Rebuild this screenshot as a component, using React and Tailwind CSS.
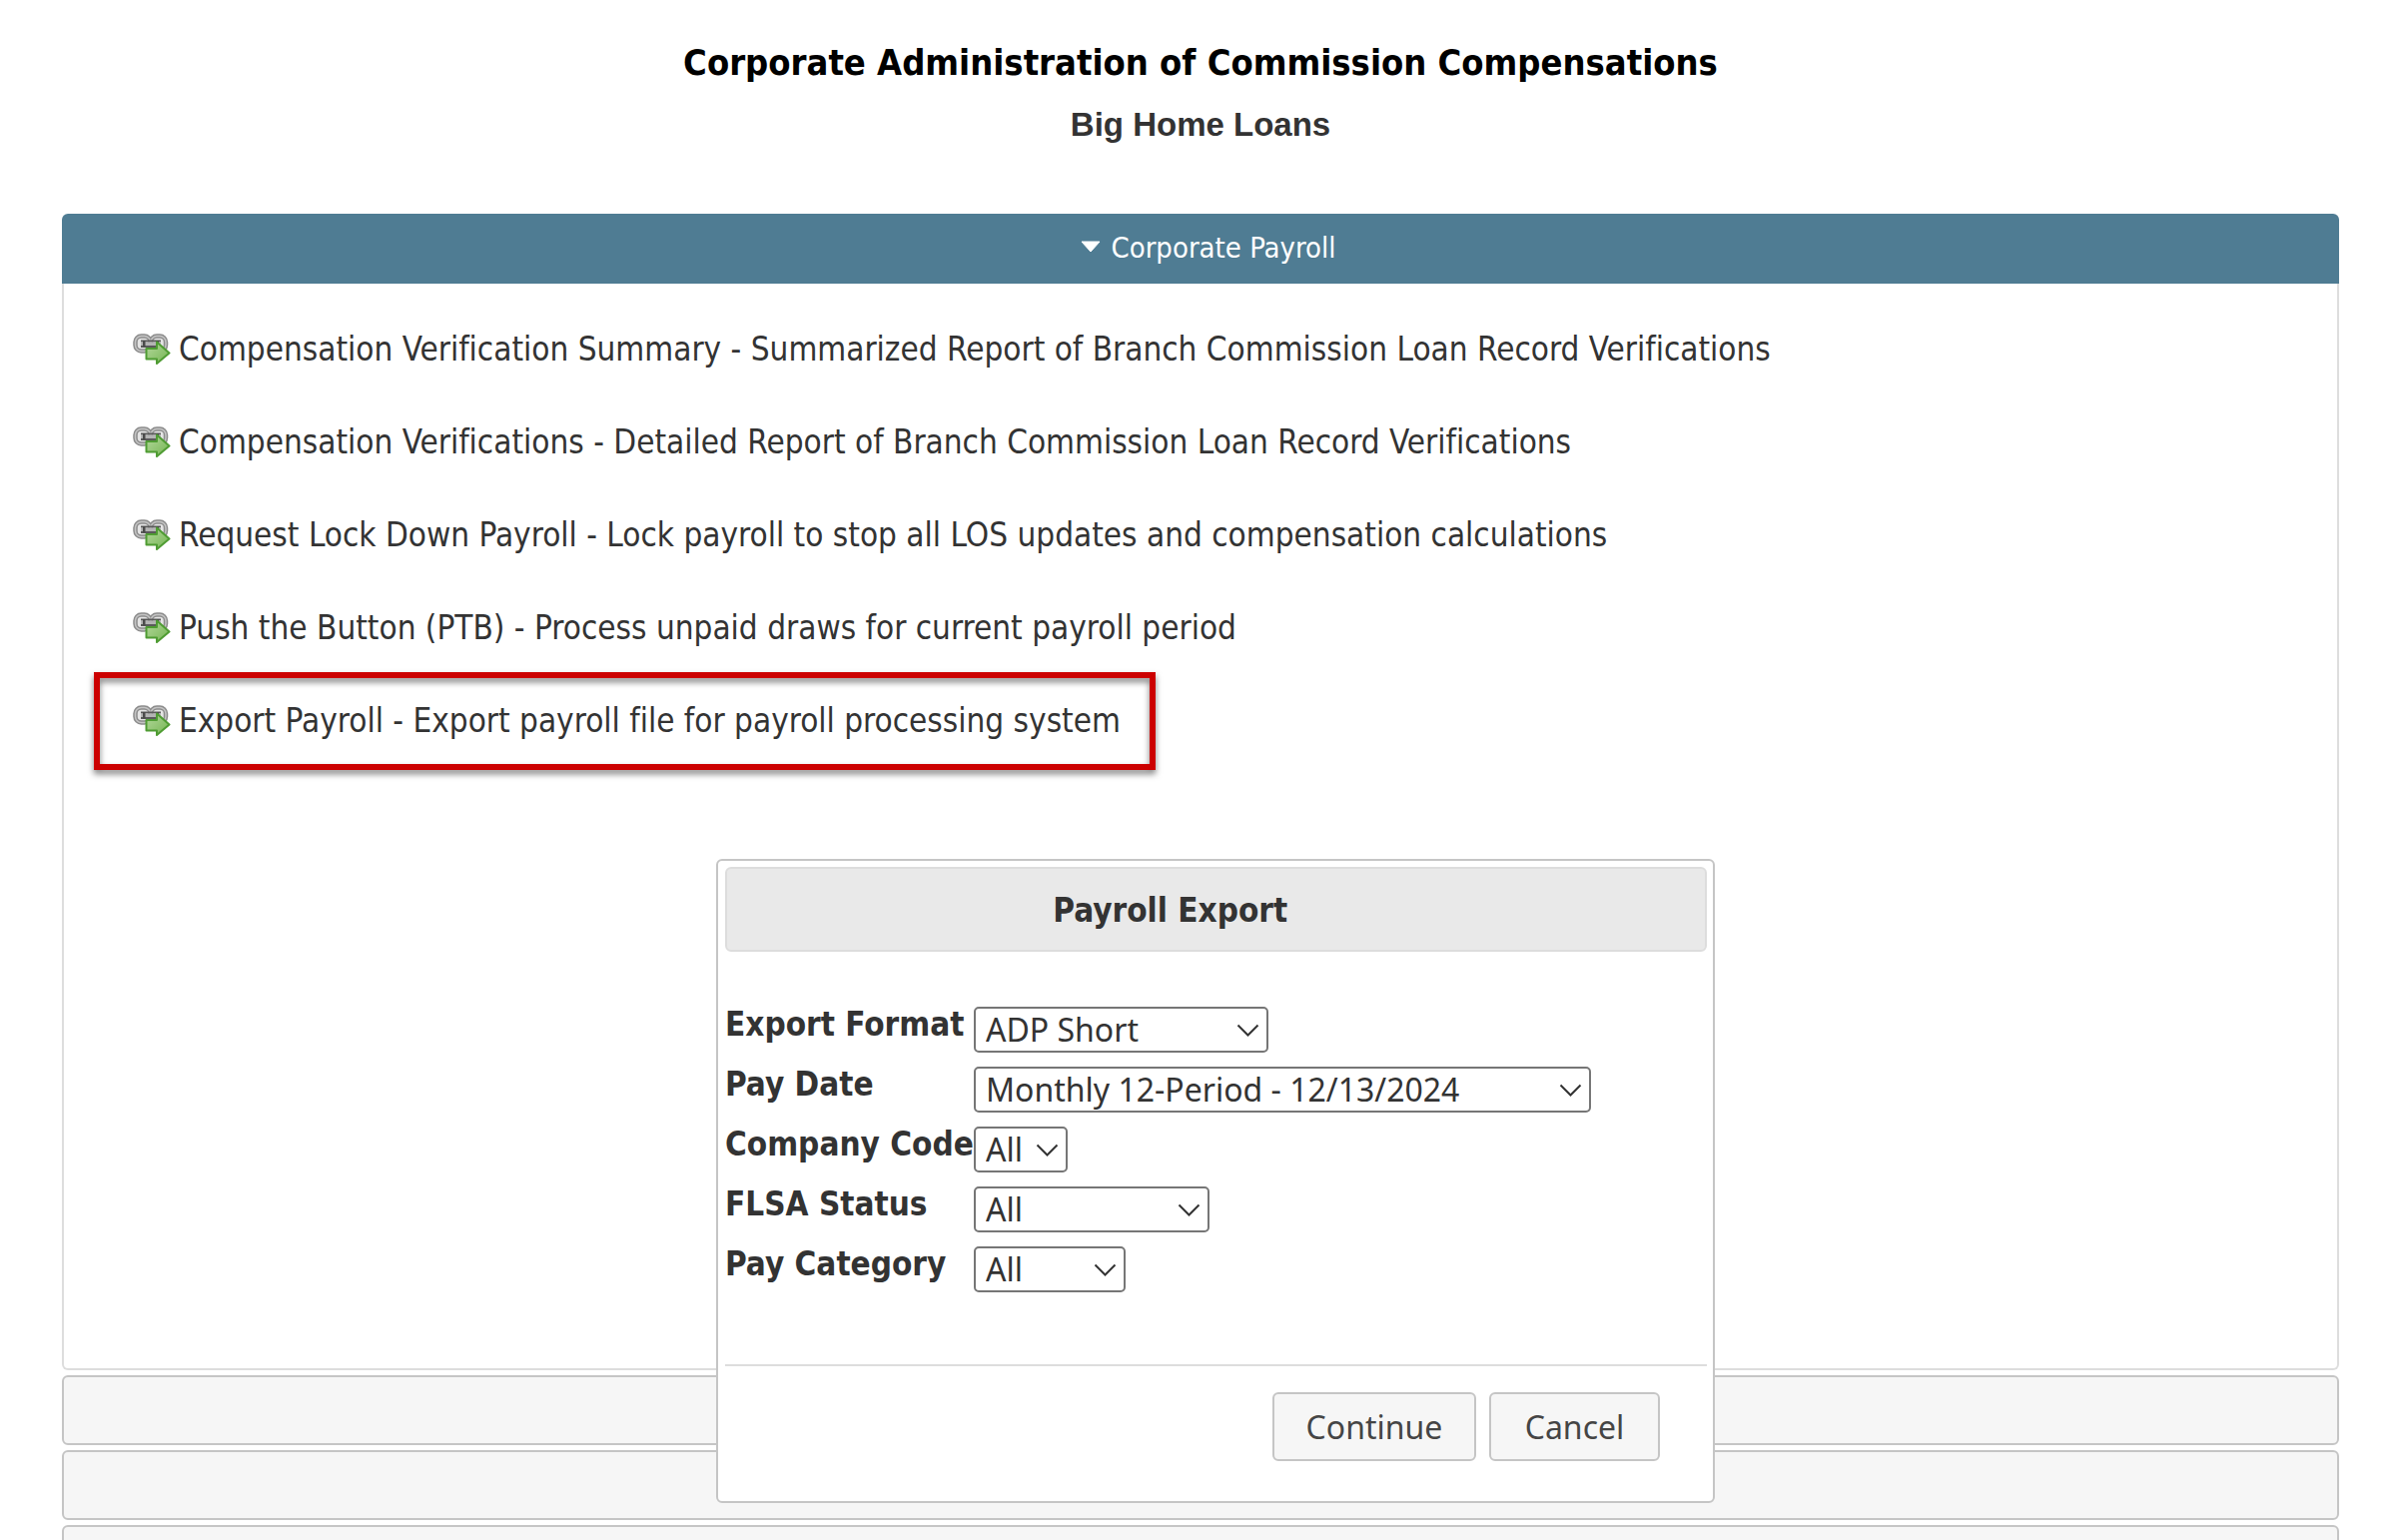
import { useState } from "react";

const links = [
  "Compensation Verification Summary - Summarized Report of Branch Commission Loan Record Verifications",
  "Compensation Verifications - Detailed Report of Branch Commission Loan Record Verifications",
  "Request Lock Down Payroll - Lock payroll to stop all LOS updates and compensation calculations",
  "Push the Button (PTB) - Process unpaid draws for current payroll period",
  "Export Payroll - Export payroll file for payroll processing system",
];

const fields = [
  { id: "format", label: "Export Format", width: "w-[295px]", options: ["ADP Short"] },
  { id: "payDate", label: "Pay Date", width: "w-[618px]", options: ["Monthly 12-Period - 12/13/2024"] },
  { id: "company", label: "Company Code", width: "w-[94px]", options: ["All"] },
  { id: "flsa", label: "FLSA Status", width: "w-[236px]", options: ["All"] },
  { id: "category", label: "Pay Category", width: "w-[152px]", options: ["All"] },
];

function LinkGoIcon() {
  return (
    <svg className="w-[38px] h-[31px] shrink-0" viewBox="0 0 38 31" fill="none">
      <defs>
        <linearGradient id="arrow" x1="0" y1="0" x2="1" y2="1">
          <stop offset="0" stopColor="#b4d89c" />
          <stop offset="1" stopColor="#74b552" />
        </linearGradient>
      </defs>
      {/* Chain */}
      <rect x="2.5" y="2.5" width="15" height="15" rx="6" fill="#e4e4e4" stroke="#8c8c8c" strokeWidth="4.5" />
      <rect x="18" y="2.5" width="15" height="15" rx="6" fill="#e4e4e4" stroke="#8c8c8c" strokeWidth="4.5" />
      <rect x="2.5" y="2.5" width="15" height="15" rx="6" stroke="#c4c4c4" strokeWidth="1.5" />
      <rect x="18" y="2.5" width="15" height="15" rx="6" stroke="#c4c4c4" strokeWidth="1.5" />
      <path d="M8 6.5h20v2H8zM8 12h20v2H8z" fill="#5a5a5a" />
      <path d="M8 8.5h20v3.5H8z" fill="#b4b4b4" />
      <path d="M10 7h2.5v6.5H10zM23.5 7H26v6.5h-2.5z" fill="#4a4a4a" />
      {/* Arrow */}
      <path
        d="M13.5 15H24V8.5L36.5 19.5L24 30V25.5H13.5Z"
        fill="url(#arrow)"
        stroke="#4f9c33"
        strokeWidth="2"
        strokeLinejoin="round"
      />
    </svg>
  );
}

function SelectField({ field }) {
  return (
    <div className="flex items-start">
      <label htmlFor={field.id} className="w-[249px] shrink-0 whitespace-nowrap text-[33px] leading-9 font-bold">
        {field.label}
      </label>
      <div className={`relative ${field.width}`}>
        <select
          id={field.id}
          className="block w-full h-[46px] pl-[10px] appearance-none bg-white border-2 border-[#767676] rounded-[5px] font-['Noto_Sans',sans-serif] text-[32px] leading-[42px]"
        >
          {field.options.map((option) => (
            <option key={option}>{option}</option>
          ))}
        </select>
        <svg
          className="absolute right-[9px] top-[17px] w-[23px] h-[14px] pointer-events-none"
          viewBox="0 0 23 14"
          fill="none"
          stroke="#333"
          strokeWidth="2"
        >
          <path d="M1.5 1.5l10 10l10-10" />
        </svg>
      </div>
    </div>
  );
}

function PayrollExportDialog({ onClose }) {
  const buttonStyle =
    "h-[69px] border-2 border-[#c5c5c5] rounded-md bg-[#f6f6f6] text-[#454545] font-['Noto_Sans',sans-serif] text-[32px]";

  return (
    <div className="absolute inset-x-0 top-[860px] flex justify-center pl-[23px]">
      <div
        role="dialog"
        aria-labelledby="dialog-title"
        className="w-[1000px] pl-[7px] pr-[6px] pt-[6px] pb-10 bg-white border-2 border-[#c5c5c5] rounded-md"
      >
        <div className="h-[85px] px-8 pt-0.5 flex items-center bg-[#e9e9e9] border-2 border-[#ddd] rounded-md">
          <h3 id="dialog-title" className="w-[90%] text-center text-[33px] font-bold">
            Payroll Export
          </h3>
        </div>

        <form onSubmit={(e) => e.preventDefault()}>
          <div className="pt-[55px] pb-[72px] space-y-[14px]">
            {fields.map((field) => (
              <SelectField key={field.id} field={field} />
            ))}
          </div>

          <div className="flex justify-end gap-[13px] pt-[26px] pr-[47px] border-t-2 border-[#ddd]">
            <button type="submit" className={`w-[204px] ${buttonStyle}`}>
              Continue
            </button>
            <button type="button" onClick={onClose} className={`w-[171px] ${buttonStyle}`}>
              Cancel
            </button>
          </div>
        </form>
      </div>
    </div>
  );
}

export default function App() {
  const [dialogOpen, setDialogOpen] = useState(true);

  return (
    <div className="relative h-screen overflow-hidden bg-white pt-8 pl-[62px] pr-[69px] font-['DejaVu_Sans_Condensed','DejaVu_Sans',sans-serif] [font-variant-ligatures:none] text-[#333]">
      <header className="pb-[58px] text-center font-bold">
        <h1 className="text-[36px] leading-[62px] text-black">Corporate Administration of Commission Compensations</h1>
        <h2 className="font-['Liberation_Sans',sans-serif] text-[33px] leading-[62px]">Big Home Loans</h2>
      </header>

      <main className="space-y-[5px]">
        {/* Open section */}
        <section>
          <button className="w-full h-[70px] flex items-center justify-center gap-[10px] bg-[#4f7c93] rounded-t-md text-[29px] text-white">
            <svg className="w-9 h-9" viewBox="0 0 36 36">
              <path d="M17 11h18l-9 10z" fill="#fff" stroke="#fff" strokeLinejoin="round" />
            </svg>
            Corporate Payroll
          </button>

          <ul className="pt-[19px] pb-[602px] pl-[69px] border-2 border-t-0 border-[#ddd] rounded-b-md">
            {links.map((text, i) => (
              <li key={text} className="relative w-fit">
                <a
                  href="#"
                  onClick={() => i === links.length - 1 && setDialogOpen(true)}
                  className="flex items-center gap-2 h-[93px] text-[33px]"
                >
                  <LinkGoIcon />
                  {text}
                </a>
                {i === links.length - 1 && (
                  <span className="absolute -top-0.5 -bottom-[3px] -left-[39px] -right-[35px] border-[6px] border-[#c00] drop-shadow-[0_4px_3px_rgba(0,0,0,0.5)] pointer-events-none" />
                )}
              </li>
            ))}
          </ul>
        </section>

        {/* Collapsed sections */}
        {[1, 2, 3].map((n) => (
          <button
            key={n}
            aria-label={`Section ${n + 1}`}
            className="block w-full h-[70px] border-2 border-[#c5c5c5] rounded-md bg-[#f6f6f6]"
          />
        ))}
      </main>

      {dialogOpen && <PayrollExportDialog onClose={() => setDialogOpen(false)} />}
    </div>
  );
}
